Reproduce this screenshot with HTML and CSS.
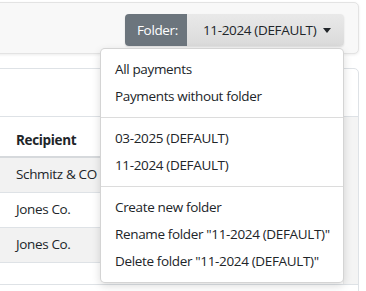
FILE: index.html
```html
<!DOCTYPE html>
<html lang="en">
<head>
<meta charset="utf-8">
<title>Payments</title>
<link rel="stylesheet" href="styles.css">
</head>
<body>
<div class="page">
  <div class="toolbar">
    <div class="input-group">
      <span class="group-label">Folder:</span>
      <button class="folder-btn" type="button">11-2024 (DEFAULT)<span class="caret"></span></button>
    </div>
    <ul class="dropdown-menu">
      <li class="item">All payments</li>
      <li class="item">Payments without folder</li>
      <li class="divider"></li>
      <li class="item">03-2025 (DEFAULT)</li>
      <li class="item">11-2024 (DEFAULT)</li>
      <li class="divider"></li>
      <li class="item">Create new folder</li>
      <li class="item">Rename folder "11-2024 (DEFAULT)"</li>
      <li class="item">Delete folder "11-2024 (DEFAULT)"</li>
    </ul>
  </div>
  <div class="card">
    <div class="card-header"></div>
    <div class="card-body">
      <div class="table-wrap">
        <table class="table">
          <thead>
            <tr><th>Recipient</th><th></th></tr>
          </thead>
          <tbody>
            <tr class="striped"><td>Schmitz &amp; CO</td><td></td></tr>
            <tr><td>Jones Co.</td><td></td></tr>
            <tr class="striped"><td>Jones Co.</td><td></td></tr>
          </tbody>
        </table>
        <div class="table-gap"></div>
      </div>
      <div class="scroll-track"></div>
    </div>
    <div class="card-footer"></div>
  </div>
</div>
</body>
</html>
```

FILE: styles.css
```css
* { box-sizing: border-box; }

html, body {
  margin: 0;
  padding: 0;
  background: #fff;
  overflow: hidden;
}

body {
  font-family: "Open Sans", "Noto Sans", sans-serif;
  font-size: 13.5px;
  letter-spacing: -0.35px;
  line-height: 21px;
  color: #212529;
}

.page {
  padding: 2px 7px 0 0;
}

.toolbar {
  position: relative;
  margin-left: -20px;
  height: 52px;
  background: #f8f8f8;
  border: 1px solid #e3e3e3;
  border-radius: 5px;
  box-shadow: 0 1px 3px rgba(0, 0, 0, 0.08);
  display: flex;
  justify-content: flex-end;
  align-items: flex-start;
  padding: 11px 14px 0 0;
}

.input-group {
  display: flex;
  height: 32px;
  border-radius: 4px;
  box-shadow: 0 1px 2px rgba(0, 0, 0, 0.12);
}

.group-label {
  width: 62px;
  padding-left: 12px;
  line-height: 32px;
  background: #6c757d;
  color: #fff;
  border-radius: 4px 0 0 4px;
}

.folder-btn {
  width: 157px;
  height: 32px;
  padding: 0 0 0 16px;
  border: 0;
  border-radius: 0 4px 4px 0;
  background: linear-gradient(#e9e9e9, #dadada);
  font: inherit;
  letter-spacing: inherit;
  color: #212529;
  text-align: left;
  display: flex;
  align-items: center;
}

.caret {
  display: inline-block;
  margin-left: 7px;
  margin-top: 1px;
  border-top: 5px solid #212529;
  border-left: 4px solid transparent;
  border-right: 4px solid transparent;
}

.dropdown-menu {
  position: absolute;
  left: 119px;
  top: 45px;
  z-index: 10;
  width: 244px;
  margin: 0;
  padding: 7px 0;
  list-style: none;
  background: #fff;
  border: 1px solid rgba(0, 0, 0, 0.17);
  border-radius: 5px;
  box-shadow: 0 3px 8px rgba(0, 0, 0, 0.14);
}

.item {
  padding: 3px 14px;
  line-height: 21px;
  white-space: nowrap;
  color: #212529;
}

.divider {
  height: 1px;
  margin: 7px 0;
  background: #dcdcdc;
}

.card {
  margin-top: 14px;
  margin-left: -20px;
  border: 1px solid #dee2e6;
  border-radius: 5px;
  background: #fff;
}

.card-header {
  height: 48px;
  border-bottom: 1px solid #dee2e6;
}

.card-body {
  display: flex;
}

.table-wrap {
  flex: 1;
}

.scroll-track {
  width: 15px;
  background: #f4f4f4;
  border-left: 1px solid #ececec;
}

.table {
  width: 100%;
  border-collapse: collapse;
}

.table th {
  text-align: left;
  font-weight: 700;
  padding: 13px 16px 5px 35px;
  border-bottom: 2px solid #d6d9dc;
}

.table td {
  padding: 6px 16px 7px 35px;
  border-bottom: 1px solid #dee2e6;
  white-space: nowrap;
}

.table th:last-child,
.table td:last-child {
  width: 100%;
}

.table tr.striped td {
  background: #f2f2f2;
}

.table-gap {
  height: 21px;
}

.card-footer {
  height: 20px;
  border-top: 1px solid #dee2e6;
}
```
